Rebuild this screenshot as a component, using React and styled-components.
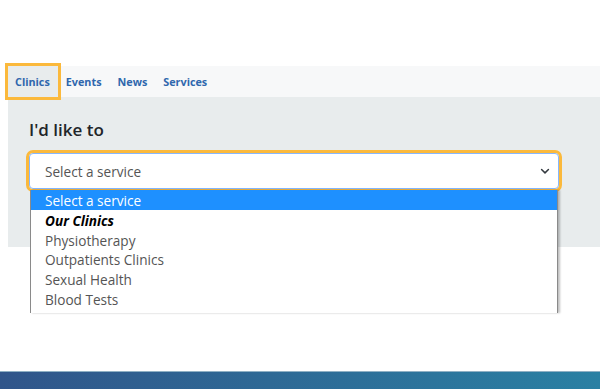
import React from "react";
import styled, { createGlobalStyle } from "styled-components";

const GlobalStyle = createGlobalStyle`
  html, body {
    margin: 0;
    padding: 0;
    background: #fff;
    font-family: "Open Sans", "Noto Sans", sans-serif;
  }
`;

const tabs = ["Clinics", "Events", "News", "Services"];

const options = [
  { label: "Select a service", selected: true },
  { label: "Our Clinics", group: true },
  { label: "Physiotherapy" },
  { label: "Outpatients Clinics" },
  { label: "Sexual Health" },
  { label: "Blood Tests" },
];

const App = () => {
  return (
    <>
      <GlobalStyle />
      <Page>
        <Widget>
          <Nav>
            {tabs.map((t, i) => (
              <Tab key={t} active={i === 0}>
                {t}
              </Tab>
            ))}
          </Nav>
          <Panel>
            <Heading>I'd like to</Heading>
            <SelectWrap>
              <SelectBox>
                <span>Select a service</span>
                <svg width="10" height="10" viewBox="0 0 16 16">
                  <path
                    d="M2.5 5.5 8 11l5.5-5.5"
                    fill="none"
                    stroke="#343a40"
                    strokeWidth="2.4"
                    strokeLinecap="round"
                    strokeLinejoin="round"
                  />
                </svg>
              </SelectBox>
              <Menu>
                {options.map((o) => (
                  <Option key={o.label} selected={o.selected} group={o.group}>
                    {o.label}
                  </Option>
                ))}
              </Menu>
            </SelectWrap>
          </Panel>
        </Widget>
        <Footer />
      </Page>
    </>
  );
};

const Page = styled.div`
  min-height: 100vh;
  display: flex;
  flex-direction: column;
  padding-top: 66px;
  box-sizing: border-box;
`;

const Widget = styled.div`
  margin-left: 8px;
`;

const Nav = styled.div`
  height: 31px;
  background: #f7f8f9;
  display: flex;
  align-items: stretch;
  gap: 1px;
`;

const Tab = styled.div`
  display: flex;
  align-items: center;
  padding: 0 8px 0 7px;
  font-size: 10.8px;
  font-weight: 700;
  color: #2f67ad;
  background: ${(p) => (p.active ? "#e8eced" : "transparent")};
  outline: ${(p) => (p.active ? "3px solid #fbb93c" : "none")};
  outline-offset: 0;
`;

const Panel = styled.div`
  height: 150px;
  background: #e8eced;
  padding: 21px 41px 0 21px;
  box-sizing: border-box;
`;

const Heading = styled.h2`
  margin: 0 0 11px;
  font-size: 17px;
  font-weight: 600;
  color: #212529;
  line-height: 24px;
`;

const SelectWrap = styled.div`
  position: relative;
`;

const SelectBox = styled.div`
  height: 34px;
  background: #fff;
  border: 1px solid #86b7fe;
  border-radius: 4px;
  outline: 3px solid #fbb93c;
  outline-offset: 0;
  display: flex;
  align-items: center;
  justify-content: space-between;
  padding: 0 8px 0 15px;
  font-size: 13.6px;
  color: #555;
`;

const Menu = styled.div`
  position: absolute;
  top: 37px;
  left: 1px;
  right: 1px;
  height: 123px;
  overflow: hidden;
  background: #fff;
  border-left: 1px solid #8a8a8a;
  border-right: 1px solid #8a8a8a;
  box-shadow: 2px 0 2px rgba(0, 0, 0, 0.25);
`;

const Option = styled.div`
  height: 19.8px;
  line-height: 21px;
  padding-left: 14px;
  font-size: 13.6px;
  color: ${(p) => (p.selected ? "#fff" : p.group ? "#000" : "#555")};
  background: ${(p) => (p.selected ? "#1e90ff" : "#fff")};
  font-weight: ${(p) => (p.group ? 700 : 400)};
  font-style: ${(p) => (p.group ? "italic" : "normal")};
`;

const Footer = styled.div`
  margin-top: auto;
  height: 17px;
  border-top: 1px solid #8fb0c4;
  background: linear-gradient(90deg, #30558a 0%, #2e6995 45%, #2a80a3 100%);
`;

export default App;
